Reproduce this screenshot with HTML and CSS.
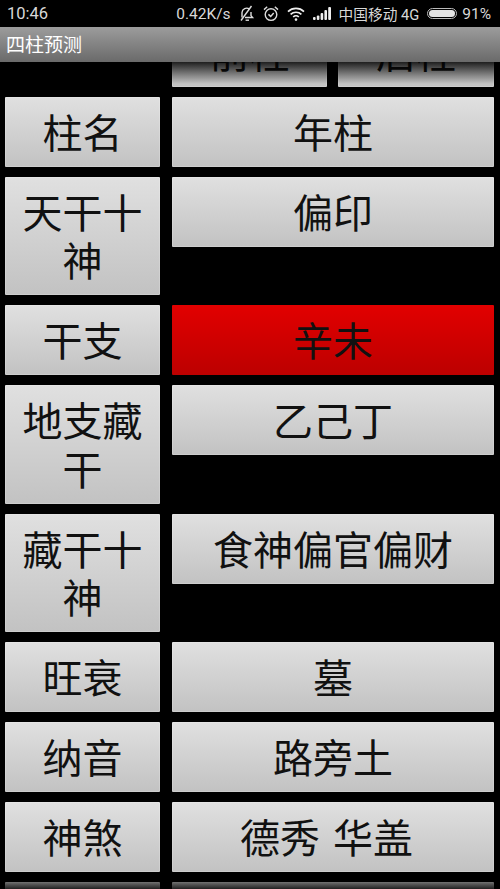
FILE: index.html
```html
<!DOCTYPE html>
<html lang="zh-CN">
  <head>
    <meta name="viewport" content="width=device-width, initial-scale=1" />
    <title>四柱预测</title>
    <link rel="stylesheet" href="styles.css">
  </head>

  <body>
    <div class="status">
      <span class="time">10:46</span>
      <div class="status-right">
        <span>0.42K/s</span>
        <svg class="icon" width="16" height="17" viewBox="0 0 16 17" fill="none" stroke="#ddd" stroke-width="1.4">
          <path d="M3 12.5 V7.5 a4.6 4.6 0 0 1 7.4-3.4"/>
          <path d="M12 7 v3.6 l1.6 1.9 H6"/>
          <path d="M6.6 15.2 h3.4" />
          <path d="M12.5 1 L2 15.5" />
        </svg>
        <svg class="icon" width="16" height="17" viewBox="0 0 16 17" fill="none" stroke="#ddd" stroke-width="1.4">
          <circle cx="8" cy="9.6" r="5.8"/>
          <path d="M5.4 9.4 l2.3 2 l3-3.4"/>
          <path d="M1 4.6 L4.2 1.8 M15 4.6 L11.8 1.8"/>
        </svg>
        <svg class="icon" width="18" height="14" viewBox="0 0 18 14" fill="none" stroke="#eee" stroke-width="1.7">
          <path d="M1 4.6 a11.5 11.5 0 0 1 16 0"/>
          <path d="M3.6 7.4 a7.8 7.8 0 0 1 10.8 0"/>
          <path d="M6.2 10 a4 4 0 0 1 5.6 0"/>
          <circle cx="9" cy="12.6" r="1.3" fill="#eee" stroke="none"/>
        </svg>
        <svg class="icon" width="18" height="13" viewBox="0 0 18 13" fill="#eee">
          <rect x="0" y="10" width="2.6" height="3" rx="1"/>
          <rect x="3.8" y="8.5" width="2.6" height="4.5" rx="1"/>
          <rect x="7.6" y="6" width="2.6" height="7" rx="1"/>
          <rect x="11.4" y="3" width="2.6" height="10" rx="1"/>
          <rect x="15.2" y="0" width="2.8" height="13" rx="1"/>
        </svg>
        <span class="carrier">中国移动 4G</span>
        <span class="battery"><span class="battery-level"></span></span>
        <span class="percent">91%</span>
      </div>
    </div>

    <div class="titlebar">四柱预测</div>

    <div class="content">
      <div class="row row-clipped">
        <span></span>
        <div class="pair">
          <button class="cell">前柱</button>
          <button class="cell">后柱</button>
        </div>
      </div>
      <div class="row"><button class="cell">柱名</button><button class="cell">年柱</button></div>
      <div class="row"><button class="cell">天干十神</button><button class="cell">偏印</button></div>
      <div class="row"><button class="cell">干支</button><button class="cell cell-red">辛未</button></div>
      <div class="row"><button class="cell">地支藏干</button><button class="cell">乙己丁</button></div>
      <div class="row"><button class="cell">藏干十神</button><button class="cell">食神偏官偏财</button></div>
      <div class="row"><button class="cell">旺衰</button><button class="cell">墓</button></div>
      <div class="row"><button class="cell">纳音</button><button class="cell">路旁土</button></div>
      <div class="row"><button class="cell">神煞</button><button class="cell">德秀 华盖&nbsp;</button></div>
      <div class="row"><button class="cell"></button><button class="cell"></button></div>
    </div>
  </body>
</html>
```

FILE: styles.css
```css
body {
  margin: 0;
  width: 500px;
  height: 889px;
  overflow: hidden;
  background-color: #000;
  font-family: "Liberation Sans", "Noto Sans CJK SC", sans-serif;
}

.status {
  height: 27px;
  padding: 0 9px 0 7px;
  display: flex;
  justify-content: space-between;
  align-items: center;
  color: #d8d8d8;
  font-size: 15.5px;
  font-family: Roboto, "Noto Sans CJK SC", sans-serif;
  box-sizing: border-box;
}

.time {
  font-size: 16.5px;
}

.status-right {
  display: flex;
  align-items: center;
  gap: 8px;
}

.carrier {
  font-size: 14.7px;
}

.battery {
  width: 30px;
  height: 11px;
  border: 1px solid #bbb;
  border-radius: 6px;
  padding: 1px;
  box-sizing: border-box;
  display: flex;
}

.battery-level {
  flex: 1;
  background: #e4e4e4;
  border-radius: 4px;
}

.percent {
  margin-left: -3px;
}

.titlebar {
  height: 35px;
  padding-left: 6px;
  line-height: 33px;
  box-sizing: border-box;
  background: linear-gradient(#9c9c9c, #6a6a6a);
  color: #fff;
  font-size: 19px;
  font-family: "Noto Sans CJK SC", sans-serif;
}

.content {
  position: relative;
  height: 827px;
  overflow: hidden;
}

/* scroll fade at both edges */
.content:before,
.content:after {
  content: "";
  position: absolute;
  left: 0;
  right: 0;
  z-index: 1;
  pointer-events: none;
}

.content:before {
  top: 0;
  height: 22px;
  background: linear-gradient(rgba(0, 0, 0, 0.85), rgba(0, 0, 0, 0));
}

.content:after {
  bottom: 0;
  height: 17px;
  background: linear-gradient(rgba(0, 0, 0, 0), rgba(0, 0, 0, 0.85));
}

.row {
  display: grid;
  grid-template-columns: 155px 322px;
  column-gap: 12px;
  align-items: start;
  padding-left: 5px;
  margin-bottom: 10px;
}

.row-clipped {
  height: 25px;
  grid-template-rows: 25px;
  overflow: hidden;
  align-items: end;
}

.pair {
  display: grid;
  grid-template-columns: 155px 156px;
  column-gap: 11px;
}

.cell {
  display: block;
  width: 100%;
  min-height: 70px;
  margin: 0;
  padding: 10px 4px 11.5px;
  border: 0;
  border-radius: 1px;
  box-sizing: border-box;
  background: linear-gradient(#e0e0e0, #c2c2c2);
  box-shadow: inset 0 0 0 1px rgba(255, 255, 255, 0.18);
  color: #111;
  font-family: "Noto Sans CJK SC", sans-serif;
  font-size: 40px;
  line-height: 48.45px;
  word-spacing: 4px;
}

.row > .cell:first-child:not(:empty) {
  padding-left: 14px;
  padding-right: 14px;
}

.cell-red {
  background: linear-gradient(#e20000, #bc0000);
  box-shadow: none;
}
```
